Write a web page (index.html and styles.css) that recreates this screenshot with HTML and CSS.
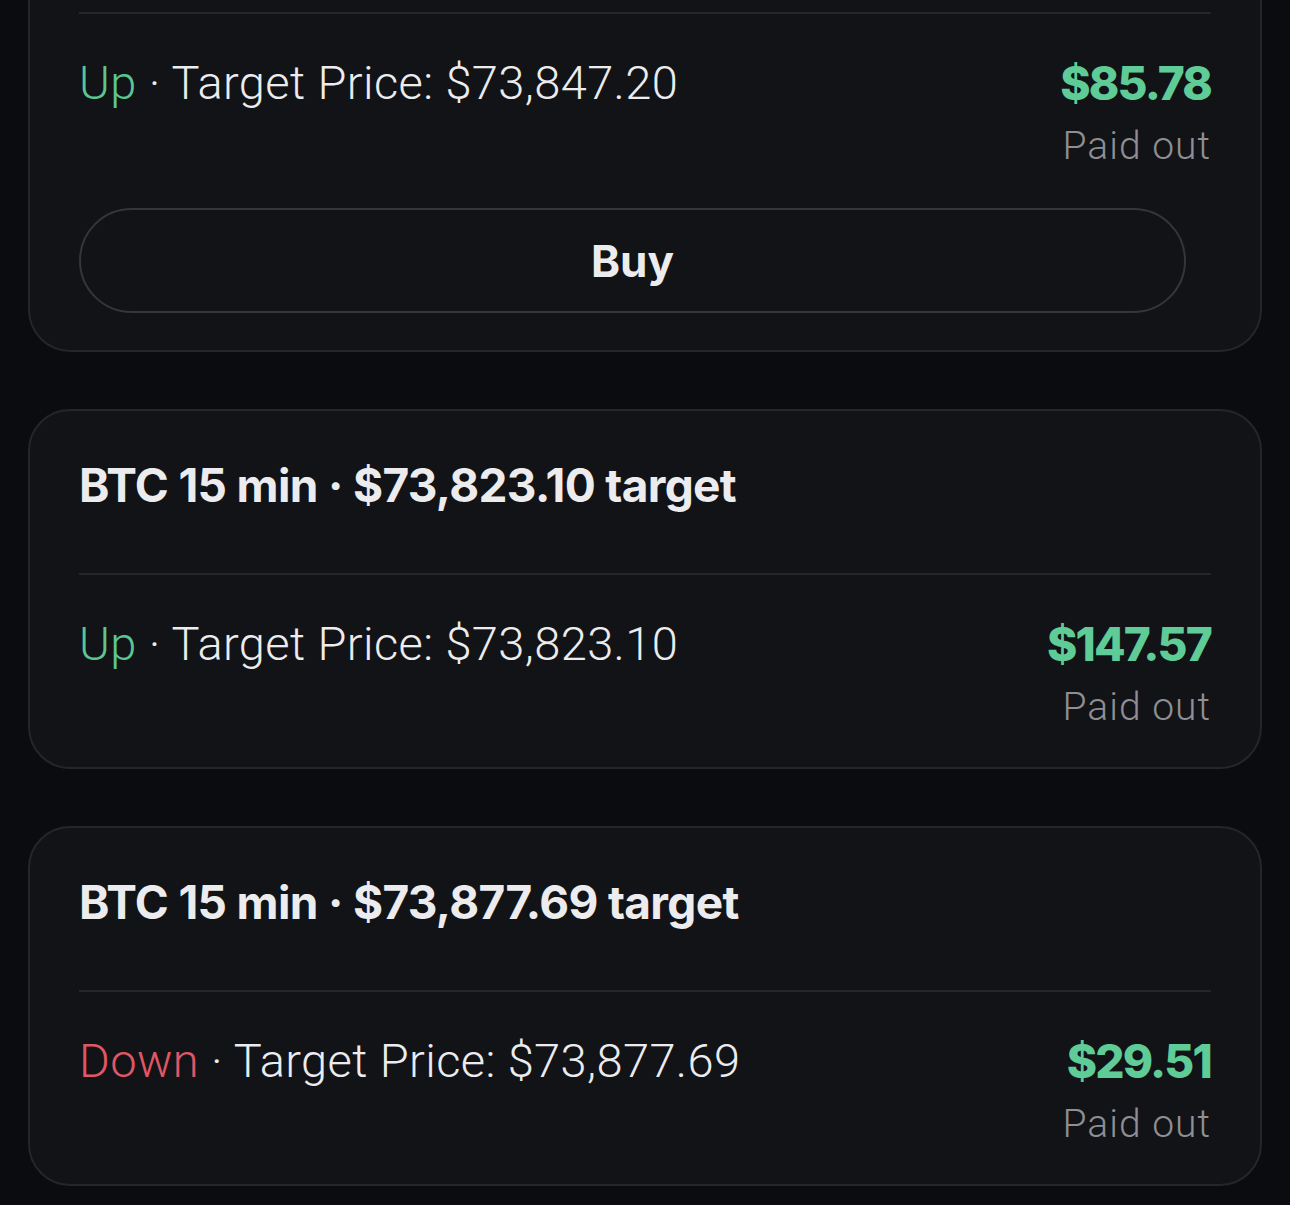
FILE: index.html
```html
<!DOCTYPE html>
<html lang="en">
<head>
    <meta charset="UTF-8">
    <meta name="viewport" content="width=device-width, initial-scale=1.0">
    <title>Positions</title>
    <link rel="stylesheet" href="styles.css">
</head>
<body>
    <main class="positions">
        <!-- first card is scrolled past its title -->
        <section class="card card-scrolled">
            <hr class="divider">
            <div class="position-row">
                <p class="position-label"><span class="side up">Up</span> · Target Price: $73,847.20</p>
                <div class="payout">
                    <p class="payout-amount">$85.78</p>
                    <p class="payout-status">Paid out</p>
                </div>
            </div>
            <button class="buy-button" type="button">Buy</button>
        </section>

        <section class="card">
            <h2 class="card-title">BTC 15 min · $73,823.10 target</h2>
            <hr class="divider">
            <div class="position-row">
                <p class="position-label"><span class="side up">Up</span> · Target Price: $73,823.10</p>
                <div class="payout">
                    <p class="payout-amount">$147.57</p>
                    <p class="payout-status">Paid out</p>
                </div>
            </div>
        </section>

        <section class="card">
            <h2 class="card-title">BTC 15 min · $73,877.69 target</h2>
            <hr class="divider">
            <div class="position-row">
                <p class="position-label"><span class="side down">Down</span> · Target Price: $73,877.69</p>
                <div class="payout">
                    <p class="payout-amount">$29.51</p>
                    <p class="payout-status">Paid out</p>
                </div>
            </div>
        </section>
    </main>
</body>
</html>
```

FILE: styles.css
```css
body {
    margin: 0;
    background-color: #0b0c0f;
    color: #ececee;
    font-family: Roboto, "Liberation Sans", sans-serif;
}
.positions {
    display: flex;
    flex-direction: column;
    gap: 57px;
    padding: 0 28px 40px;
}
.card {
    background-color: #121316;
    border: 2px solid #25262a;
    border-radius: 42px;
    padding: 46px 49px 37px;
}
.card-scrolled {
    border-top: 0;
    border-top-left-radius: 0;
    border-top-right-radius: 0;
    padding-top: 12px;
}
.card-title {
    margin: 0 0 60px;
    font-family: Inter, sans-serif;
    font-size: 46px;
    line-height: 56px;
    font-weight: 700;
    letter-spacing: -0.65px;
}
.divider {
    margin: 0;
    border: 0;
    border-top: 2px solid #25262a;
}
.position-row {
    display: flex;
    justify-content: space-between;
    align-items: flex-start;
    margin-top: 41px;
}
.position-label {
    margin: 0;
    font-size: 47px;
    line-height: 56px;
    font-weight: 300;
    letter-spacing: 0.4px;
}
.side.up {
    color: #5bc593;
}
.side.down {
    color: #e05767;
}
.payout {
    text-align: right;
}
.payout-amount {
    margin: 0;
    font-family: Inter, sans-serif;
    font-size: 46px;
    line-height: 56px;
    font-weight: 800;
    letter-spacing: -1.8px;
    color: #5fcb97;
}
.payout-status {
    margin: 12px 0 0;
    font-size: 39px;
    line-height: 46px;
    font-weight: 300;
    letter-spacing: 1px;
    color: #8e8e93;
}
.buy-button {
    display: block;
    width: calc(100% - 25px);
    height: 105px;
    margin-top: 39px;
    background: transparent;
    border: 2px solid #35363a;
    border-radius: 53px;
    color: #ececee;
    font-family: Inter, sans-serif;
    font-size: 44px;
    font-weight: 700;
    cursor: pointer;
}
```
